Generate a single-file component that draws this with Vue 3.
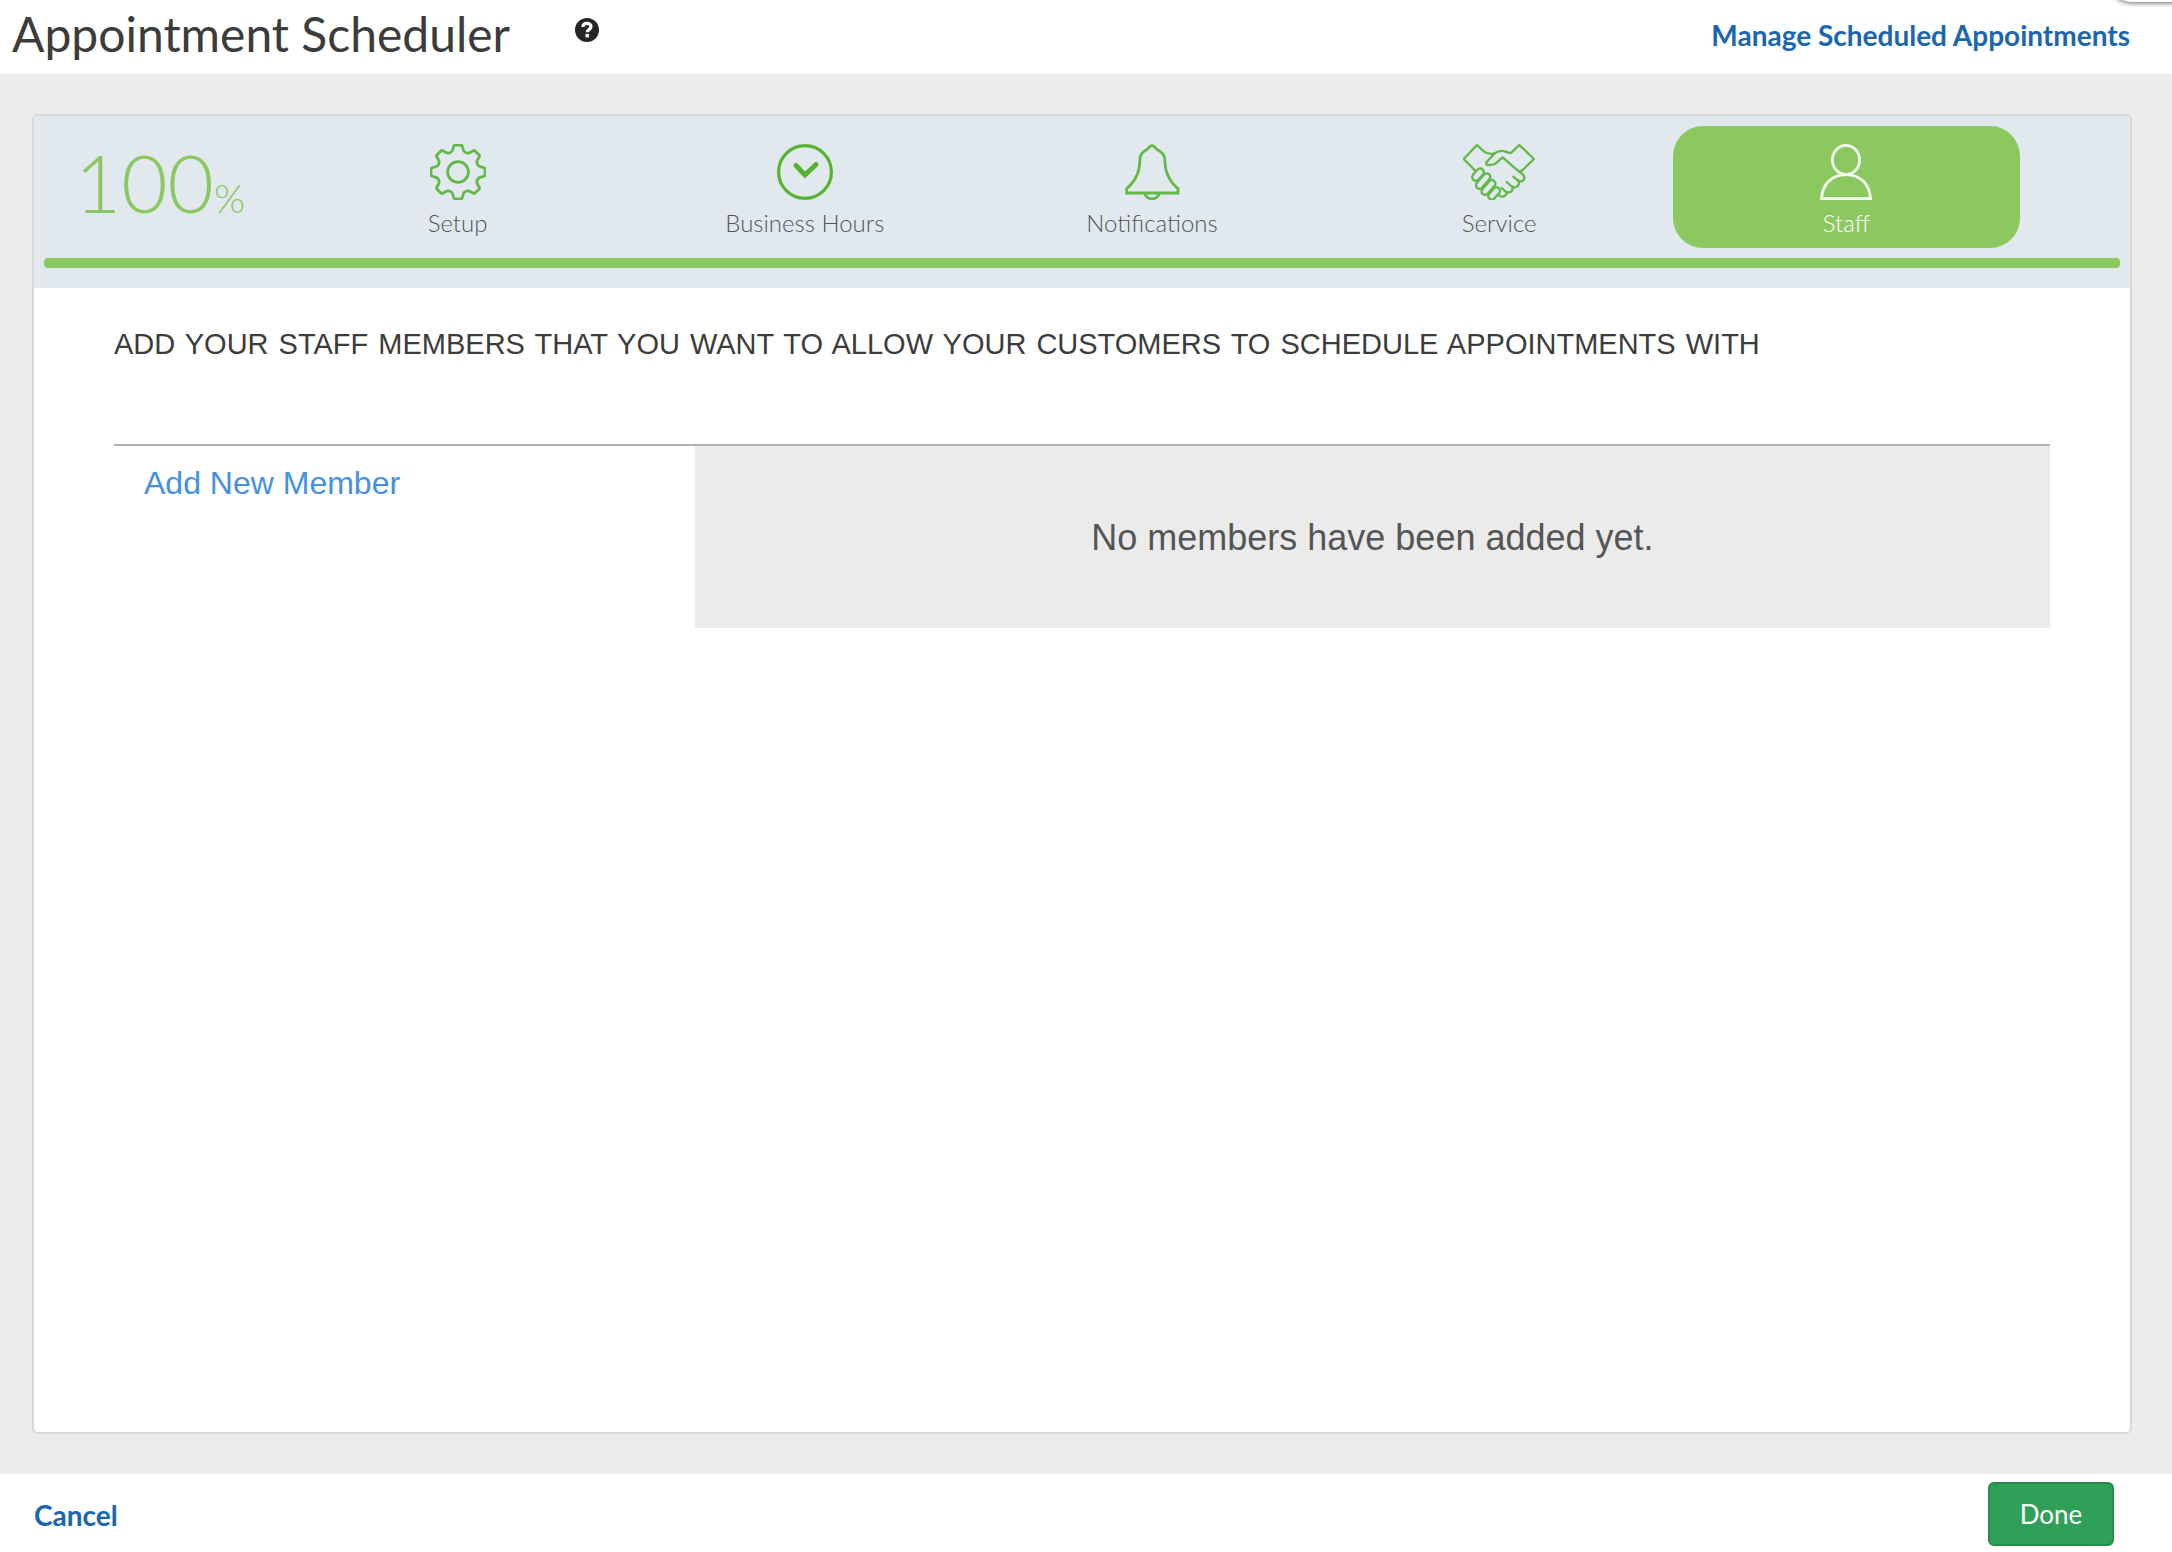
<script setup>
const percent = 100

const steps = [
  { id: 'setup', label: 'Setup' },
  { id: 'hours', label: 'Business Hours' },
  { id: 'notifications', label: 'Notifications' },
  { id: 'service', label: 'Service' },
  { id: 'staff', label: 'Staff' },
]
const current = 'staff'

// Gear outline: eight rounded teeth around the centre of a 56 unit box.
function gearPath() {
  const at = (x, r, turn) => {
    const a = (turn * Math.PI) / 4
    const px = 28 + x * Math.cos(a) + r * Math.sin(a)
    const py = 28 + x * Math.sin(a) - r * Math.cos(a)
    return `${px.toFixed(2)} ${py.toFixed(2)}`
  }
  let d = `M${at(-5, 23, 0)}`
  for (let i = 0; i < 8; i++) {
    d += `L${at(-4.4, 25.5, i)}Q${at(-4, 27, i)} ${at(-2.5, 27, i)}`
    d += `L${at(2.5, 27, i)}Q${at(4, 27, i)} ${at(4.4, 25.5, i)}L${at(5, 23, i)}`
    d += `C${at(5.6, 19.4, i)} ${at(-5.6, 19.4, i + 1)} ${at(-5, 23, i + 1)}`
  }
  return d + 'Z'
}
const gear = gearPath()
</script>

<template>
  <div class="page">
    <header class="header">
      <h1 class="title">Appointment Scheduler</h1>
      <button class="help" type="button" aria-label="Help">
        <svg viewBox="0 0 24 24" aria-hidden="true">
          <circle cx="12" cy="12" r="12" fill="#262626" />
          <path d="M7.8 9C8 6.400 9.900 5.300 12 5.300C14.400 5.300 16 6.700 16 8.600C16 11.400 12.300 11.300 12.300 14.200" fill="none" stroke="#fff" stroke-width="3.200" />
          <rect x="10.500" y="16" width="3.400" height="3.400" fill="#fff" />
        </svg>
      </button>
      <a class="link manage" href="#appointments">Manage Scheduled Appointments</a>
    </header>
    <div class="drawer" aria-hidden="true"></div>

    <main class="body">
      <section class="panel">
        <div class="wizard">
          <div class="steps">
            <div class="percent">{{ percent }}<span class="sign">%</span></div>
            <nav class="tabs" aria-label="Setup steps">
              <button
                v-for="step in steps"
                :key="step.id"
                type="button"
                class="step"
                :class="{ active: step.id === current }"
                :aria-current="step.id === current ? 'step' : undefined"
              >
                <svg v-if="step.id === 'setup'" class="icon" viewBox="0 0 56 56" aria-hidden="true">
                  <path :d="gear" />
                  <circle cx="28" cy="28" r="10.400" />
                </svg>
                <svg v-else-if="step.id === 'hours'" class="icon strong" viewBox="0 0 56 56" aria-hidden="true">
                  <circle cx="28" cy="28" r="26.400" />
                  <path class="hand" d="M19 21.500L28 31L39 20.500" />
                </svg>
                <svg v-else-if="step.id === 'notifications'" class="icon" viewBox="0 0 56 56" aria-hidden="true">
                  <path d="M28 1.500C25.500 1.500 25 4 23 5.500C19 7.500 16.500 9.500 16 14C15.500 22 15.500 27 12.500 32C9.500 38 6 42 2.700 44.500V49H54V44.500C50 41.500 46.500 37 44 31.500C41 26 41.300 20 40.600 14C40 9.500 37 7.500 33 5.500C31 4 30.500 1.500 28 1.500Z" />
                  <path d="M20.500 49.500C22 53 25 54.800 28 54.800S34 53 35.500 49.500" />
                </svg>
                <svg v-else-if="step.id === 'service'" class="icon wide" viewBox="72 42 216 168" aria-hidden="true">
                  <path d="M110 123L74 87L114 45L135 65Q147 74 166 71" />
                  <path d="M143 96L168 69Q186 59 200 65Q210 70 217 68L241 45L285 87L249 122L240 125" />
                  <path d="M143 96Q138 105 150 105Q167 105 176 95L191 82L225 112L251 133Q261 143 252 151Q245 157 236 151L223 140" />
                  <path d="M238 152Q243 166 232 171Q224 174 216 168L203 156" />
                  <path d="M221 171Q221 186 210 187Q203 188 199 184L188 174" />
                  <path d="M204 187Q200 200 189 200Q182 199 178 194" />
                  <rect x="-21" y="-11" width="42" height="22" rx="11" transform="translate(117 134) rotate(-49)" />
                  <rect x="-27" y="-10" width="54" height="21" rx="10" transform="translate(132 153) rotate(-49)" />
                  <rect x="-26" y="-10" width="52" height="21" rx="10" transform="translate(148 172) rotate(-49)" />
                  <rect x="-21" y="-10" width="42" height="21" rx="10" transform="translate(165 190) rotate(-49)" />
                </svg>
                <svg v-else class="icon" viewBox="0 0 56 56" aria-hidden="true">
                  <ellipse cx="28" cy="16" rx="13.600" ry="14.600" />
                  <path d="M3.500 54.500C4.500 40 14 30.600 28 30.600S51.500 40 52.500 54.500Z" />
                </svg>
                <span class="label">{{ step.label }}</span>
              </button>
            </nav>
          </div>
          <div class="track" role="progressbar" aria-label="Setup progress" :aria-valuenow="percent" aria-valuemin="0" aria-valuemax="100">
            <div class="fill" :style="{ width: percent + '%' }"></div>
          </div>
        </div>

        <div class="content">
          <h2 class="heading">Add your staff members that you want to allow your customers to schedule appointments with</h2>
          <div class="members">
            <div class="side">
              <a class="add" href="#new-member">Add New Member</a>
            </div>
            <p class="empty">No members have been added yet.</p>
          </div>
        </div>
      </section>
    </main>

    <footer class="footer">
      <a class="link cancel" href="#cancel">Cancel</a>
      <button class="done" type="button">Done</button>
    </footer>
  </div>
</template>

<style>
body {
  margin: 0;
}
</style>

<style scoped>
.page {
  position: relative;
  display: flex;
  flex-direction: column;
  min-height: 100vh;
  overflow: hidden;
  background: #ebebeb;
  font-family: Lato, sans-serif;
  color: #3c3c3c;
}
.page * {
  box-sizing: border-box;
}
.header {
  display: flex;
  align-items: flex-start;
  height: 74px;
  padding: 5px 42px 0 12px;
  background: #fff;
}
.title {
  margin: 0;
  font-size: 48px;
  line-height: 58px;
  font-weight: 400;
}
.help {
  width: 24px;
  height: 24px;
  margin: 13px 0 0 65px;
  padding: 0;
  border: 0;
  background: none;
}
.help svg {
  display: block;
}
.link {
  font-size: 28px;
  line-height: 34px;
  font-weight: 700;
  color: #1a66b0;
  text-decoration: none;
}
.manage {
  margin: 13px 0 0 auto;
}
.drawer {
  position: absolute;
  top: -58px;
  right: -40px;
  width: 104px;
  height: 60px;
  border-radius: 24px;
  background: #fff;
  box-shadow: 0 1px 5px rgba(0, 0, 0, 0.6);
}
.body {
  display: flex;
  flex: 1;
  padding: 40px 40px 40px 32px;
}
.panel {
  flex: 1;
  border: 2px solid #d8d8d8;
  border-radius: 6px;
  overflow: hidden;
  background: #fff;
}
.wizard {
  padding: 10px 10px 20px;
  background: #e1e9ef;
}
.steps {
  display: flex;
  padding-right: 100px;
}
.percent {
  width: 240px;
  padding: 8px 8px 0 0;
  font-size: 80px;
  line-height: 96px;
  font-weight: 300;
  text-align: center;
  color: #8bc960;
}
.sign {
  font-size: 40px;
  line-height: 40px;
}
.tabs {
  display: flex;
  flex: 1;
}
.step {
  display: flex;
  flex: 1 1 0;
  flex-direction: column;
  align-items: center;
  height: 122px;
  padding: 18px 0 0;
  border: 0;
  border-radius: 30px;
  background: none;
  font-family: inherit;
  color: #555;
}
.step.active {
  background: #8bc960;
  color: #fff;
}
.icon {
  width: 56px;
  height: 56px;
  fill: none;
  stroke: #62b945;
  stroke-width: 2.800;
}
.active .icon {
  stroke: #f4faf0;
}
.icon.strong {
  stroke: #56b331;
  stroke-width: 3.200;
}
.icon .hand {
  stroke-width: 5;
  stroke-linecap: round;
}
.icon.wide {
  width: 72px;
  stroke-width: 7;
  stroke-linejoin: round;
  stroke-linecap: round;
}
.label {
  margin-top: 8px;
  font-size: 24px;
  line-height: 30px;
  font-weight: 300;
}
.track {
  height: 10px;
  margin-top: 10px;
}
.fill {
  height: 10px;
  border-radius: 4px;
  background: #8bc960;
}
.content {
  padding: 40px 80px;
  font-family: "Liberation Sans", Arial, sans-serif;
}
.heading {
  margin: 0;
  font-size: 29px;
  line-height: 32px;
  font-weight: 400;
  word-spacing: 2px;
  text-transform: uppercase;
}
.members {
  display: flex;
  margin-top: 84px;
  border-top: 2px solid #b3b3b3;
}
.side {
  width: 30%;
  padding: 18px 30px;
}
.add {
  font-size: 32px;
  line-height: 38px;
  color: #4490e2;
  text-decoration: none;
}
.empty {
  flex: 1;
  margin: 0;
  padding: 71px 0 69px;
  background: #ebebeb;
  font-size: 36px;
  line-height: 42px;
  text-align: center;
  color: #555;
}
.footer {
  display: flex;
  align-items: center;
  justify-content: space-between;
  height: 78px;
  padding: 2px 58px 0 34px;
  background: #fff;
}
.cancel {
  padding-top: 2px;
}
.done {
  width: 126px;
  height: 64px;
  border: 2px solid #278b49;
  border-radius: 6px;
  background: #309f57;
  font-family: inherit;
  font-size: 26px;
  line-height: 32px;
  color: #fff;
}
</style>
